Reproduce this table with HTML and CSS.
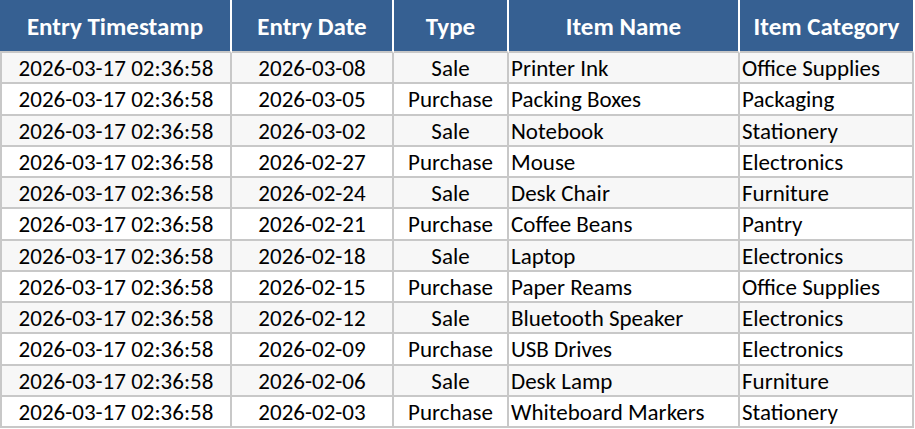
FILE: index.html
```html
<!DOCTYPE html>
<html>
<head>
<meta charset="utf-8">
<link rel="stylesheet" href="styles.css">
</head>
<body>
<table class="sheet">
  <colgroup>
    <col class="c1"><col class="c2"><col class="c3"><col class="c4"><col class="c5">
  </colgroup>
  <thead>
    <tr>
      <th>Entry Timestamp</th>
      <th>Entry Date</th>
      <th>Type</th>
      <th>Item Name</th>
      <th>Item Category</th>
    </tr>
  </thead>
  <tbody>
    <tr><td class="ctr">2026-03-17 02:36:58</td><td class="ctr">2026-03-08</td><td class="ctr">Sale</td><td>Printer Ink</td><td>Office Supplies</td></tr>
    <tr><td class="ctr">2026-03-17 02:36:58</td><td class="ctr">2026-03-05</td><td class="ctr">Purchase</td><td>Packing Boxes</td><td>Packaging</td></tr>
    <tr><td class="ctr">2026-03-17 02:36:58</td><td class="ctr">2026-03-02</td><td class="ctr">Sale</td><td>Notebook</td><td>Stationery</td></tr>
    <tr><td class="ctr">2026-03-17 02:36:58</td><td class="ctr">2026-02-27</td><td class="ctr">Purchase</td><td>Mouse</td><td>Electronics</td></tr>
    <tr><td class="ctr">2026-03-17 02:36:58</td><td class="ctr">2026-02-24</td><td class="ctr">Sale</td><td>Desk Chair</td><td>Furniture</td></tr>
    <tr><td class="ctr">2026-03-17 02:36:58</td><td class="ctr">2026-02-21</td><td class="ctr">Purchase</td><td>Coffee Beans</td><td>Pantry</td></tr>
    <tr><td class="ctr">2026-03-17 02:36:58</td><td class="ctr">2026-02-18</td><td class="ctr">Sale</td><td>Laptop</td><td>Electronics</td></tr>
    <tr><td class="ctr">2026-03-17 02:36:58</td><td class="ctr">2026-02-15</td><td class="ctr">Purchase</td><td>Paper Reams</td><td>Office Supplies</td></tr>
    <tr><td class="ctr">2026-03-17 02:36:58</td><td class="ctr">2026-02-12</td><td class="ctr">Sale</td><td>Bluetooth Speaker</td><td>Electronics</td></tr>
    <tr><td class="ctr">2026-03-17 02:36:58</td><td class="ctr">2026-02-09</td><td class="ctr">Purchase</td><td>USB Drives</td><td>Electronics</td></tr>
    <tr><td class="ctr">2026-03-17 02:36:58</td><td class="ctr">2026-02-06</td><td class="ctr">Sale</td><td>Desk Lamp</td><td>Furniture</td></tr>
    <tr><td class="ctr">2026-03-17 02:36:58</td><td class="ctr">2026-02-03</td><td class="ctr">Purchase</td><td>Whiteboard Markers</td><td>Stationery</td></tr>
  </tbody>
</table>
</body>
</html>
```
FILE: styles.css
```css
html, body {
  margin: 0;
  padding: 0;
  background: #ffffff;
}

.sheet {
  border-collapse: separate;
  border-spacing: 0;
  table-layout: fixed;
  width: 914px;
  font-family: Carlito, Lato, "Liberation Sans", sans-serif;
  color: #000;
}

.c1 { width: 232px; }
.c2 { width: 162px; }
.c3 { width: 115px; }
.c4 { width: 231px; }
.c5 { width: 174px; }

.sheet th {
  background: #366092;
  color: #ffffff;
  font-weight: 700;
  font-size: 25px;
  line-height: 28px;
  height: 53px;
  padding: 2px 0 0;
  box-sizing: border-box;
  text-align: center;
  vertical-align: middle;
  white-space: nowrap;
  border-right: 2px solid #ffffff;
  border-bottom: 2px solid #c8c8c8;
}

.sheet th:last-child {
  border-right: 1px solid #ffffff;
}

.sheet td {
  font-size: 23px;
  line-height: 23.25px;
  padding: 4px 2px 2px;
  text-align: left;
  white-space: nowrap;
  overflow: hidden;
  border-right: 2px solid #c8c8c8;
  border-bottom: 2px solid #c8c8c8;
}

.sheet td:first-child {
  border-left: 2px solid #c8c8c8;
}

.sheet td.ctr {
  text-align: center;
}

.sheet tbody tr:nth-child(odd) td {
  background: #f7f7f7;
}

.sheet tbody tr:nth-child(even) td {
  background: #ffffff;
}
```
